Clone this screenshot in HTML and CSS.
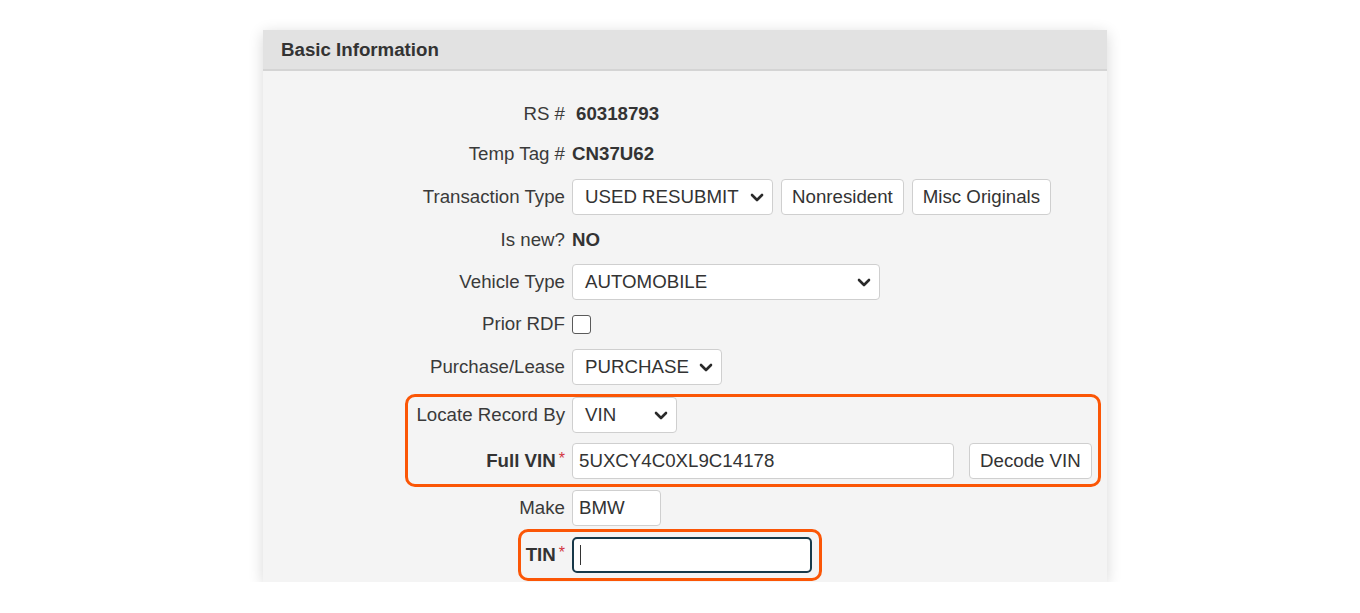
FILE: index.html
```html
<!DOCTYPE html>
<html lang="en">
<head>
    <meta charset="UTF-8">
    <title>Basic Information</title>
    <link rel="stylesheet" href="styles.css">
</head>
<body>
    <div class="panel">
        <div class="panel-header">Basic Information</div>
        <div class="panel-body">
            <div class="row">
                <label class="label">RS #</label>
                <span class="value value-pad">60318793</span>
            </div>
            <div class="row row-sm">
                <label class="label">Temp Tag #</label>
                <span class="value">CN37U62</span>
            </div>
            <div class="row">
                <label class="label">Transaction Type</label>
                <div class="controls">
                    <div class="select w-trans">
                        <span>USED RESUBMIT</span>
                        <svg class="chevron" width="14" height="9" viewBox="0 0 14 9"><polyline points="2,2 7,7 12,2"/></svg>
                    </div>
                    <button class="btn">Nonresident</button>
                    <button class="btn">Misc Originals</button>
                </div>
            </div>
            <div class="row">
                <label class="label">Is new?</label>
                <span class="value">NO</span>
            </div>
            <div class="row row-md">
                <label class="label">Vehicle Type</label>
                <div class="select w-vehicle">
                    <span>AUTOMOBILE</span>
                    <svg class="chevron" width="14" height="9" viewBox="0 0 14 9"><polyline points="2,2 7,7 12,2"/></svg>
                </div>
            </div>
            <div class="row row-md">
                <label class="label">Prior RDF</label>
                <span class="checkbox"></span>
            </div>
            <div class="row">
                <label class="label">Purchase/Lease</label>
                <div class="select w-purchase">
                    <span>PURCHASE</span>
                    <svg class="chevron" width="14" height="9" viewBox="0 0 14 9"><polyline points="2,2 7,7 12,2"/></svg>
                </div>
            </div>

            <div class="highlight highlight-vin">
                <div class="row row-flush">
                    <label class="label">Locate Record By</label>
                    <div class="select w-locate">
                        <span>VIN</span>
                        <svg class="chevron" width="14" height="9" viewBox="0 0 14 9"><polyline points="2,2 7,7 12,2"/></svg>
                    </div>
                </div>
                <div class="row row-vin">
                    <label class="label strong">Full VIN<span class="req">*</span></label>
                    <div class="controls">
                        <input class="input w-vin" type="text" value="5UXCY4C0XL9C14178">
                        <button class="btn btn-decode">Decode VIN</button>
                    </div>
                </div>
            </div>

            <div class="row row-lg">
                <label class="label">Make</label>
                <input class="input w-make" type="text" value="BMW">
            </div>
            <div class="highlight highlight-tin">
                <div class="row row-flush">
                    <label class="label strong">TIN<span class="req">*</span></label>
                    <input class="input input-focus w-tin" type="text" value="">
                </div>
            </div>
        </div>
    </div>
</body>
</html>
```

FILE: styles.css
```css
* {
    margin: 0;
    padding: 0;
    box-sizing: border-box;
}

body {
    background: #ffffff;
    font-family: 'Liberation Sans', Arial, sans-serif;
    font-size: 18.7px;
    color: #333333;
    padding: 30px 0 0 263px;
}

.panel {
    width: 844px;
    background-color: #f4f4f4;
    box-shadow: 0 3px 14px rgba(0, 0, 0, 0.16);
}

.panel-header {
    height: 41px;
    padding: 9px 18px 0;
    background-color: #e2e2e2;
    border-bottom: 2px solid #d4d4d4;
    font-weight: bold;
    color: #333333;
}

.panel-body {
    padding: 25px 0 9px;
}

.row {
    display: grid;
    grid-template-columns: 302px 1fr;
    column-gap: 7px;
    align-items: center;
    height: 36px;
    margin-top: 7px;
}

.row:first-child {
    margin-top: 0;
}

.row.row-sm {
    margin-top: 4px;
}

.row.row-md {
    margin-top: 6px;
}

.row.row-lg {
    margin-top: 11px;
}

.row.row-vin {
    margin-top: 10px;
}

.row.row-flush {
    margin-top: 0;
}

.label {
    text-align: right;
    color: #3a3a3a;
    white-space: nowrap;
}

.label.strong {
    font-weight: bold;
    color: #333333;
}

.req {
    color: #d2333f;
    font-size: 16px;
    font-weight: normal;
    position: relative;
    top: -3px;
    margin-left: 3px;
}

.value {
    font-weight: bold;
    color: #333333;
}

.value-pad {
    padding-left: 4px;
}

.checkbox {
    width: 19px;
    height: 19px;
    background-color: #ffffff;
    border: 1.5px solid #5a5a5a;
    border-radius: 3px;
}

.controls {
    display: flex;
    align-items: center;
}

.select {
    display: flex;
    align-items: center;
    justify-content: space-between;
    height: 36px;
    padding: 0 8px 0 12px;
    background-color: #ffffff;
    border: 1px solid #cfcfcf;
    border-radius: 4px;
    color: #333333;
}

.chevron {
    fill: none;
    stroke: #2a2a2a;
    stroke-width: 2.6;
    stroke-linecap: round;
    stroke-linejoin: round;
}

.w-trans { width: 201px; }
.w-vehicle { width: 308px; }
.w-purchase { width: 150px; }
.w-locate { width: 105px; }
.w-vin { width: 382px; }
.w-make { width: 89px; }
.w-tin { width: 240px; }

.btn {
    height: 36px;
    margin-left: 8px;
    padding: 0 10px;
    background-color: #ffffff;
    border: 1px solid #cfcfcf;
    border-radius: 4px;
    font-family: inherit;
    font-size: 18.7px;
    color: #333333;
}

.btn-decode {
    margin-left: 15px;
}

.input {
    height: 36px;
    padding: 0 6px;
    background-color: #ffffff;
    border: 1px solid #cfcfcf;
    border-radius: 4px;
    font-family: inherit;
    font-size: 18.7px;
    color: #333333;
    outline: none;
}

.input-focus {
    border: 2px solid #17394a;
    border-radius: 5px;
    background: linear-gradient(#333333, #333333) no-repeat 6px center / 1px 20px, #ffffff;
}

/* annotation boxes drawn over the form */
.highlight {
    position: relative;
}

.highlight-vin {
    margin-top: 12px;
}

.highlight-tin {
    margin-top: 11px;
}

.highlight::after {
    content: '';
    position: absolute;
    border: 3px solid #fb5606;
    border-radius: 10px;
    pointer-events: none;
}

.highlight-vin::after {
    top: -3px;
    bottom: -8px;
    left: 142px;
    right: 6px;
}

.highlight-tin::after {
    top: -8px;
    bottom: -8px;
    left: 255px;
    right: 285px;
}
```
